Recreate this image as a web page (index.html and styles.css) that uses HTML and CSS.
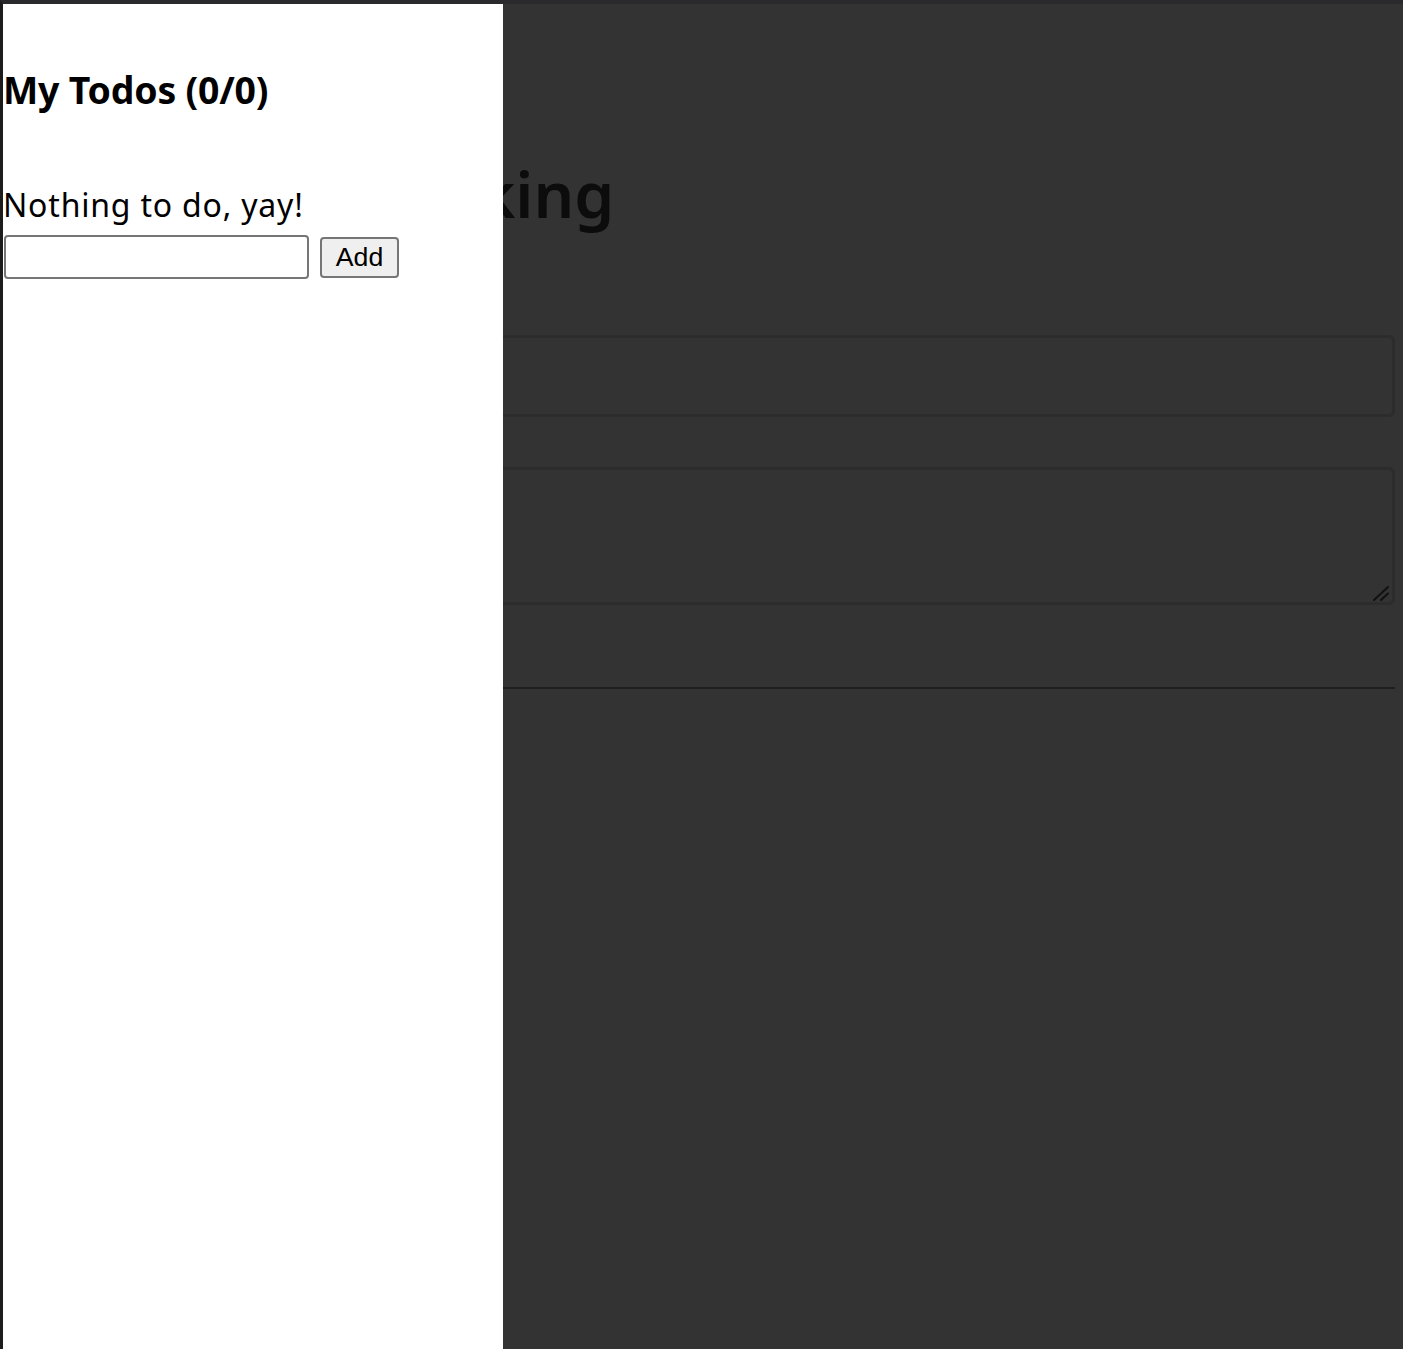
FILE: index.html
```html
<!DOCTYPE html>
<html>
<head>
<meta charset="utf-8">
<title>Todos</title>
<link rel="stylesheet" href="styles.css">
</head>
<body>
<div class="screen">
  <main class="page">
    <h1 class="page-title">Note taking</h1>
    <input class="field" type="text">
    <div class="area-wrap">
      <textarea class="area"></textarea>
      <svg class="grip" width="18" height="16" viewBox="0 0 18 16"><path d="M2 15 L16 2 M9 15 L16 8.5" stroke="#111" stroke-width="2" stroke-linecap="round" fill="none"/></svg>
    </div>
    <hr class="rule">
  </main>
  <aside class="panel">
    <h3 class="panel-title">My Todos (0/0)</h3>
    <p class="empty">Nothing to do, yay!</p>
    <form class="add-form">
      <input class="add-input" type="text">
      <button class="add-btn" type="button">Add</button>
    </form>
  </aside>
</div>
</body>
</html>
```
FILE: styles.css
```css
html, body {
  margin: 0;
  padding: 0;
  height: 100%;
}
body {
  background: #333333;
  overflow: hidden;
}
.screen {
  position: relative;
  height: 1349px;
  box-sizing: border-box;
  border-top: 4px solid #2a2a2d;
  border-left: 3px solid #1c1c1c;
  background: #333333;
}
.page {
  padding: 0 8px 0 5px;
  display: flex;
  flex-direction: column;
}
.page-title {
  margin: 146px 0 0 0;
  padding-left: 236px;
  font-family: "Noto Sans", sans-serif;
  font-weight: 600;
  font-size: 64px;
  line-height: 87px;
  color: #0c0c0c;
}
.field {
  margin: 98px 0 0 0;
  height: 82px;
  box-sizing: border-box;
  border: 3px solid #2c2c2c;
  border-radius: 6px;
  background: #333333;
  outline: none;
}
.area-wrap {
  position: relative;
  margin: 50px 0 0 0;
  display: flex;
}
.area {
  flex: 1;
  height: 138px;
  box-sizing: border-box;
  border: 3px solid #2c2c2c;
  border-radius: 6px;
  background: #333333;
  outline: none;
  resize: none;
  margin: 0;
}
.grip {
  position: absolute;
  right: 5px;
  bottom: 4px;
}
.rule {
  margin: 82px 0 0 0;
  border: 0;
  height: 2px;
  background: #1f1f1f;
}
.panel {
  position: absolute;
  left: 0;
  top: 0;
  width: 500px;
  height: 1345px;
  background: #ffffff;
  box-sizing: border-box;
  padding-top: 60px;
  font-family: "Noto Sans", sans-serif;
  color: #000;
}
.panel-title {
  margin: 0;
  font-size: 37.44px;
  line-height: 52px;
  font-weight: 700;
  letter-spacing: -0.2px;
}
.empty {
  margin: 67px 0 0 0;
  font-size: 32px;
  line-height: 44px;
  letter-spacing: 0.8px;
}
.add-form {
  margin-top: 8px;
  display: flex;
  align-items: center;
  gap: 11px;
}
.add-input {
  width: 305px;
  height: 44px;
  box-sizing: border-box;
  border: 2px solid #767676;
  border-radius: 4px;
  margin: 0 0 0 1px;
  padding: 0 4px;
  background: #fff;
}
.add-btn {
  width: 79px;
  height: 41px;
  box-sizing: border-box;
  border: 2px solid #767676;
  border-radius: 4px;
  background: #efefef;
  font-family: "Liberation Sans", Arial, sans-serif;
  font-size: 26.67px;
  color: #000;
  padding: 0;
}
```
